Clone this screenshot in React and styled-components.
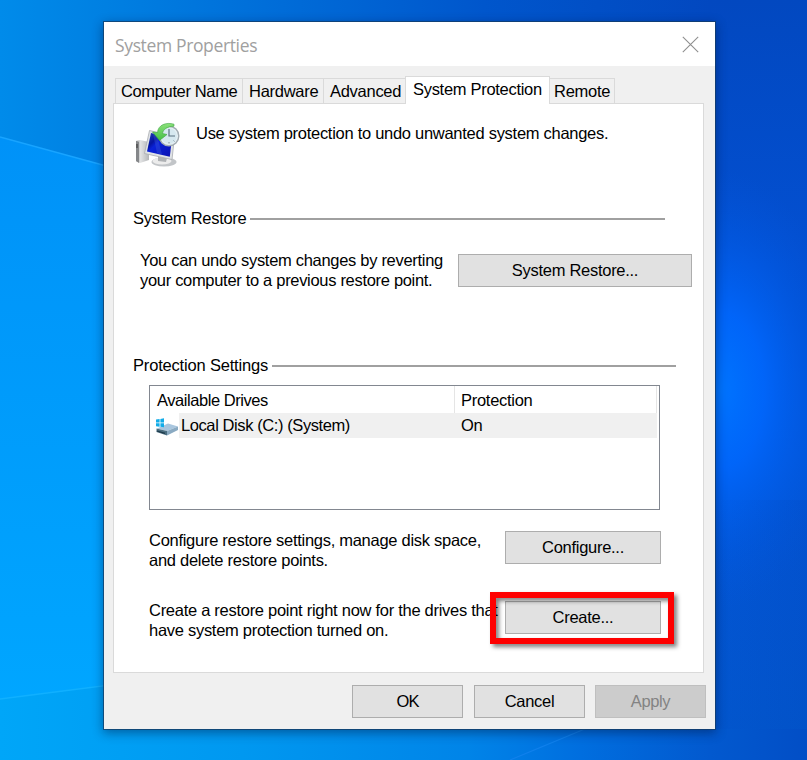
import React from 'react';
import styled, { createGlobalStyle } from 'styled-components';

const GlobalStyle = createGlobalStyle`
  body {
    margin: 0;
  }
  * {
    box-sizing: border-box;
  }
`;

const Desktop = styled.div`
  position: relative;
  width: 807px;
  height: 760px;
  padding: 21px 0 0 103px;
  overflow: hidden;
  font-family: "Liberation Sans", Arial, sans-serif;
  font-size: 16.5px;
  color: #000;
  background: #0058d0;
`;

const Wallpaper = styled.svg`
  position: absolute;
  inset: 0;
`;

const Window = styled.div`
  position: relative;
  display: flex;
  flex-direction: column;
  width: 613px;
  height: 709px;
  border: 1px solid rgba(20, 60, 100, 0.75);
  background: #f0f0f0;
  background-clip: padding-box;
  box-shadow: 0 3px 10px rgba(0, 20, 60, 0.45);
`;

const TitleBar = styled.div`
  display: flex;
  justify-content: space-between;
  align-items: center;
  height: 44px;
  padding: 0 16px 0 11px;
  background: #fff;
  color: #a0a0a0;
  font-family: "Open Sans", "Noto Sans", sans-serif;
  font-size: 17.5px;

  span {
    padding-top: 1px;
  }
`;

const Text = styled.span`
  display: block;
  line-height: 20px;
  white-space: pre;
  letter-spacing: ${(props) => props.$track ?? -0.28}px;
`;

const Tabs = styled.div`
  display: flex;
  align-items: flex-end;
  height: 37px;
  padding-left: 11px;
`;

const Tab = styled.div`
  display: flex;
  align-items: center;
  width: ${(props) => props.$width}px;
  height: ${(props) => (props.$active ? 28 : 25)}px;
  margin: 0 -1px ${(props) => (props.$active ? -1 : 0)}px 0;
  padding: 0 0 ${(props) => (props.$active ? 4 : 0)}px ${(props) => props.$indent}px;
  border: 1px solid #dadada;
  border-bottom: 0;
  background: ${(props) => (props.$active ? '#fff' : '#f0f0f0')};
  position: relative;
  z-index: ${(props) => (props.$active ? 1 : 0)};
`;

const Panel = styled.div`
  display: flex;
  flex-direction: column;
  width: 591px;
  height: 570px;
  margin-left: 9px;
  border: 1px solid #dadada;
  background: #fff;
`;

const Intro = styled.div`
  display: flex;
  gap: 14px;
  height: 104px;
  padding: 18px 0 0 20px;

  span {
    margin-top: 1px;
  }
`;

const GroupTitle = styled.div`
  display: flex;
  height: 20px;
  padding-left: 19px;
`;

const GroupLabel = styled.div`
  width: ${(props) => props.$width}px;
`;

const Rule = styled.div`
  width: ${(props) => props.$width}px;
  height: 2px;
  margin-top: 10px;
  background: #a0a0a0;
`;

const Action = styled.div`
  display: flex;
  justify-content: space-between;
  align-items: flex-start;
  height: ${(props) => props.$height}px;
  padding: ${(props) => props.$top || 0}px ${(props) => props.$right}px 0 ${(props) => props.$left}px;
`;

const ActionText = styled.div`
  width: 0;
  margin-top: ${(props) => props.$lift || -1}px;
`;

const Button = styled.button`
  display: flex;
  justify-content: center;
  align-items: center;
  width: ${(props) => props.$width}px;
  height: 33px;
  padding: 0 0 2px;
  border: 1px solid #adadad;
  border-radius: 0;
  background: #e1e1e1;
  color: #000;
  font: inherit;

  &:disabled {
    margin-left: -1px;
    border-color: #bfbfbf;
    background: #ccc;
    color: #838383;
  }
`;

const DriveList = styled.div`
  width: 511px;
  height: 125px;
  margin: 10px 0 21px 35px;
  border: 1px solid #828790;
  background: #fff;
`;

const DriveRow = styled.div`
  display: flex;
  height: ${(props) => (props.$header ? 27 : 25)}px;
  padding-right: 2px;
`;

const DriveIconCell = styled.div`
  width: 29px;
  padding: 5px 0 0 6px;
`;

const DriveCell = styled.div`
  display: flex;
  align-items: center;
  width: ${(props) => props.$width}px;
  padding-left: ${(props) => props.$indent}px;
  padding-bottom: ${(props) => (props.$selected ? 1 : 0)}px;
  background: ${(props) => (props.$selected ? '#f0f0f0' : '#fff')};
  border-right: ${(props) => (props.$divider ? '1px solid #e5e5e5' : '0')};
`;

const Highlight = styled.div`
  position: absolute;
  left: 386px;
  top: 570px;
  width: 184px;
  height: 52px;
  border: 6px solid #fe0000;
  filter: drop-shadow(3px 3px 2px rgba(0, 0, 0, 0.5));
  pointer-events: none;
`;

const Footer = styled.div`
  display: flex;
  justify-content: flex-end;
  gap: 11px;
  padding: 12px 9px 0 0;
`;

const CloseIcon = () => (
  <svg width="17" height="17" viewBox="0 0 17 17">
    <path d="M.8.8l15.400 15.400M16.200.8L.8 16.200" stroke="#8f8f8f" strokeWidth="1.100" />
  </svg>
);

const RestoreIcon = () => (
  <svg width="48" height="48" viewBox="0 0 48 48">
    <defs>
      <linearGradient id="tower" x1="0" x2="1">
        <stop offset="0" stopColor="#909294" />
        <stop offset=".35" stopColor="#e2e3e4" />
        <stop offset="1" stopColor="#b4b6b8" />
      </linearGradient>
      <linearGradient id="screen" x1="0" y1="0" x2="1" y2="1">
        <stop offset="0" stopColor="#2444b4" />
        <stop offset=".3" stopColor="#0614a0" />
        <stop offset=".42" stopColor="#0a22d8" />
        <stop offset="1" stopColor="#0a10b0" />
      </linearGradient>
      <linearGradient id="arrow" x1="0" y1="0" x2="0" y2="1">
        <stop offset="0" stopColor="#8be07a" />
        <stop offset="1" stopColor="#45c046" />
      </linearGradient>
    </defs>
    <path d="M2 19l4-1 9 2v18l-9 3-4-2z" fill="url(#tower)" />
    <path d="M2 19l3 1v21l-3-2z" fill="#85878a" />
    <path d="M3 22v4" stroke="#333" />
    <ellipse cx="30" cy="40" rx="12.500" ry="4.500" fill="#c2c5c8" />
    <ellipse cx="28" cy="39" rx="9.500" ry="3.500" fill="#ececec" />
    <path d="M24 34l9 2-1 4-8-1z" fill="#aeb1b4" />
    <path d="M15.500 8.500l25 6L38 37.500 10.500 31.500z" fill="#e0e3e6" stroke="#a9acb0" strokeWidth=".8" />
    <path d="M17 11l21 5-2.200 18.800L13 29.500z" fill="url(#screen)" />
    <path d="M19 12l4 1 5 19.500-5-1.200z" fill="#5478e0" opacity=".25" />
    <circle cx="35" cy="14" r="9.800" fill="#e6f0f4" stroke="#a2acb2" strokeWidth="1.400" />
    <circle cx="35" cy="14" r="7.800" fill="#d6e8ef" />
    <path d="M35 7v7h6" fill="none" stroke="#587080" strokeWidth="1.200" />
    <path d="M28 14h1.500M35 20v1.500M39.500 18.500l1 1" stroke="#8297a2" />
    <path d="M40 2.200C32-.2 24 3 23.500 10.500l-5-.5 7 8.500 7.500-6-4.500-1C29 7.500 33 4.500 40 4.200z" fill="url(#arrow)" stroke="#3aa63f" strokeWidth=".6" />
  </svg>
);

const DriveIcon = () => (
  <svg width="23" height="18" viewBox="0 0 23 18">
    <path d="M1 10.500L12 5.500l10 3-11 4.500z" fill="#a9c6de" />
    <path d="M.5 10.500L11 13v4.500L.5 14z" fill="#4a6d80" />
    <path d="M11 13l11-4.500V12l-11 5.500z" fill="#8aaac2" />
    <path d="M1 13l8 2.300" stroke="#1d3948" strokeWidth="1.200" />
    <path d="M0 1.500L3.600 1v3.400H0zM4.400.9L8 .3v4.100H4.400zM0 5.200h3.600v3.500L0 8.300zM4.400 5.200H8v4.100l-3.600-.5z" fill="#12ace8" />
  </svg>
);

const Background = () => (
  <Wallpaper width="807" height="760" viewBox="0 0 807 760">
    <defs>
      <linearGradient id="sky" x1="0" x2="1">
        <stop offset="0" stopColor="#008bea" />
        <stop offset=".13" stopColor="#0080e2" />
        <stop offset=".35" stopColor="#006cd8" />
        <stop offset=".6" stopColor="#0056cc" />
        <stop offset=".88" stopColor="#0248c0" />
        <stop offset="1" stopColor="#0248c0" />
      </linearGradient>
      <linearGradient id="beam" x1="0" y1="0" x2="0" y2="1">
        <stop offset="0" stopColor="#0092f8" />
        <stop offset=".9" stopColor="#00a6ff" />
        <stop offset="1" stopColor="#00a4f8" />
      </linearGradient>
      <linearGradient id="floor" gradientUnits="userSpaceOnUse" x1="0" x2="807">
        <stop offset="0" stopColor="#00a6f8" />
        <stop offset=".3" stopColor="#0098f0" />
        <stop offset=".58" stopColor="#0084e8" />
        <stop offset=".72" stopColor="#006edf" />
        <stop offset=".88" stopColor="#0259cf" />
        <stop offset="1" stopColor="#024ec6" />
      </linearGradient>
      <linearGradient id="side" x1="0" y1="0" x2="0" y2="1">
        <stop offset="0" stopColor="#0248c0" />
        <stop offset=".35" stopColor="#0350d2" />
        <stop offset=".6" stopColor="#0355d8" />
        <stop offset="1" stopColor="#0256cc" />
      </linearGradient>
      <linearGradient id="edge" x1="0" x2="1">
        <stop offset="0" stopColor="#0040b0" stopOpacity="0" />
        <stop offset="1" stopColor="#0040b0" stopOpacity=".35" />
      </linearGradient>
      <radialGradient id="glow">
        <stop offset="0" stopColor="#0074ff" />
        <stop offset=".35" stopColor="#0068ff" stopOpacity=".85" />
        <stop offset=".7" stopColor="#0060f0" stopOpacity=".35" />
        <stop offset="1" stopColor="#0058e0" stopOpacity="0" />
      </radialGradient>
    </defs>
    <rect width="807" height="760" fill="url(#sky)" />
    <path d="M0 137l110 30v600H0z" fill="url(#beam)" />
    <path d="M0 137l110 30" stroke="#18a4ff" strokeWidth="1.500" />
    <rect x="710" width="97" height="760" fill="url(#side)" />
    <ellipse cx="720" cy="390" rx="125" ry="220" fill="url(#glow)" />
    <rect x="710" y="500" width="97" height="229" fill="url(#edge)" opacity=".5" />
    <path d="M0 699l104-14v44h611v31H0z" fill="url(#floor)" />
    <rect x="715" y="729" width="92" height="31" fill="url(#floor)" />
    <path d="M510 760l82-34" stroke="#1080ec" strokeWidth="1.200" />
    <path d="M0 699l110-14" stroke="#10b0ff" strokeWidth="1.500" />
  </Wallpaper>
);

const App = () => {
  return (
    <>
      <GlobalStyle />
      <Desktop>
        <Background />
        <Window>
          <TitleBar>
            <Text $track={-0.36}>System Properties</Text>
            <CloseIcon />
          </TitleBar>
          <Tabs>
            <Tab $width={128} $indent={5}><Text $track={-0.36}>Computer Name</Text></Tab>
            <Tab $width={82} $indent={6}><Text>Hardware</Text></Tab>
            <Tab $width={83} $indent={6}><Text>Advanced</Text></Tab>
            <Tab $width={145} $indent={7} $active><Text $track={-0.3}>System Protection</Text></Tab>
            <Tab $width={66} $indent={4}><Text>Remote</Text></Tab>
          </Tabs>
          <Panel>
            <Intro>
              <RestoreIcon />
              <Text>Use system protection to undo unwanted system changes.</Text>
            </Intro>
            <GroupTitle>
              <GroupLabel $width={117}><Text>System Restore</Text></GroupLabel>
              <Rule $width={415} />
            </GroupTitle>
            <Action $left={26} $right={11} $top={26} $height={127}>
              <ActionText $lift={-4}>
                <Text $track={-0.3}>You can undo system changes by reverting</Text>
                <Text $track={-0.31}>your computer to a previous restore point.</Text>
              </ActionText>
              <Button $width={234}><Text>System Restore...</Text></Button>
            </Action>
            <GroupTitle>
              <GroupLabel $width={139}><Text $track={-0.18}>Protection Settings</Text></GroupLabel>
              <Rule $width={404} />
            </GroupTitle>
            <DriveList>
              <DriveRow $header>
                <DriveCell $width={305} $indent={7} $divider><Text $track={-0.45}>Available Drives</Text></DriveCell>
                <DriveCell $width={202} $indent={6} $divider><Text>Protection</Text></DriveCell>
              </DriveRow>
              <DriveRow>
                <DriveIconCell><DriveIcon /></DriveIconCell>
                <DriveCell $width={276} $indent={2} $selected><Text $track={-0.41}>Local Disk (C:) (System)</Text></DriveCell>
                <DriveCell $width={202} $indent={6} $selected><Text>On</Text></DriveCell>
              </DriveRow>
            </DriveList>
            <Action $left={35} $right={42} $height={70}>
              <ActionText>
                <Text>Configure restore settings, manage disk space,</Text>
                <Text>and delete restore points.</Text>
              </ActionText>
              <Button $width={156}><Text>Configure...</Text></Button>
            </Action>
            <Action $left={35} $right={42} $height={33}>
              <ActionText>
                <Text>Create a restore point right now for the drives that</Text>
                <Text>have system protection turned on.</Text>
              </ActionText>
              <Button $width={156}><Text>Create...</Text></Button>
            </Action>
          </Panel>
          <Footer>
            <Button $width={111}><Text $track={-0.8}>OK</Text></Button>
            <Button $width={111}><Text>Cancel</Text></Button>
            <Button $width={111} disabled><Text $track={-0.4}>Apply</Text></Button>
          </Footer>
          <Highlight />
        </Window>
      </Desktop>
    </>
  );
};

export default App;
